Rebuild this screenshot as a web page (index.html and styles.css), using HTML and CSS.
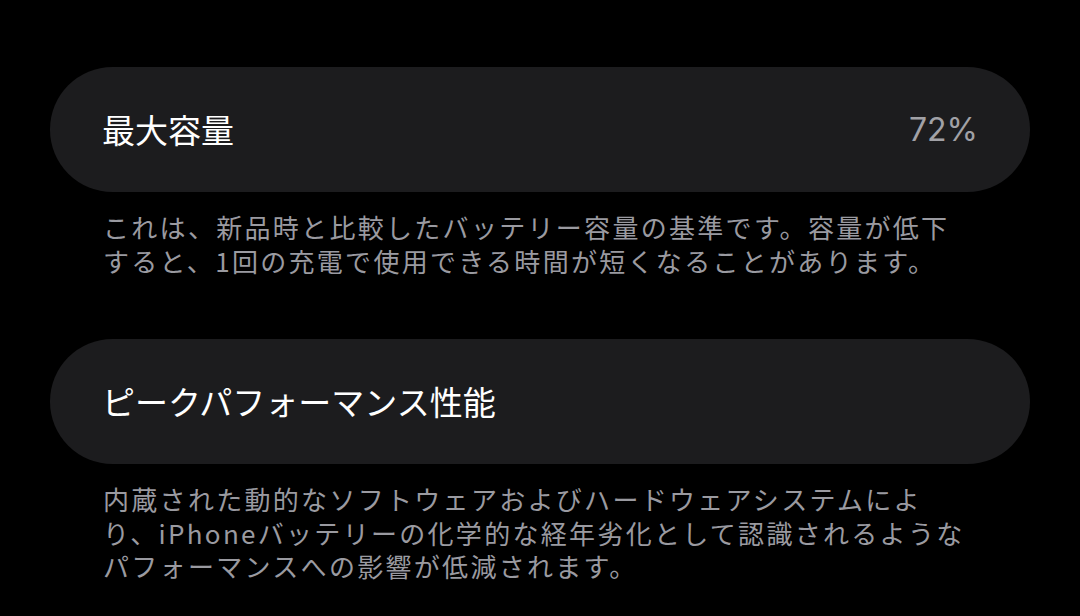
FILE: index.html
```html
<!DOCTYPE html>
<html lang="ja">
<head>
<meta charset="utf-8">
<link rel="stylesheet" href="styles.css">
</head>
<body>
<main class="page">
  <section class="group">
    <div class="card">
      <span class="title">最大容量</span>
      <span class="value">72%</span>
    </div>
    <p class="footer">これは、新品時と比較したバッテリー容量の基準です。容量が低下すると、1回の充電で使用できる時間が短くなることがあります。</p>
  </section>
  <section class="group">
    <div class="card">
      <span class="title">ピークパフォーマンス性能</span>
    </div>
    <p class="footer">内蔵された動的なソフトウェアおよびハードウェアシステムにより、iPhoneバッテリーの化学的な経年劣化として認識されるようなパフォーマンスへの影響が低減されます。</p>
  </section>
</main>
</body>
</html>
```
FILE: styles.css
```css
html, body {
  margin: 0;
  padding: 0;
  background: #000;
}
body {
  width: 1080px;
  height: 616px;
  overflow: hidden;
  font-family: "Noto Sans CJK JP", sans-serif;
}
.page {
  display: flex;
  flex-direction: column;
  gap: 62px;
  padding: 67px 50px 0 50px;
}
.group {
  display: flex;
  flex-direction: column;
  gap: 18px;
}
.card {
  height: 125px;
  box-sizing: border-box;
  background: #1c1c1e;
  border-radius: 63px;
  padding: 0 52px 0 52px;
  display: flex;
  align-items: center;
  justify-content: space-between;
}
.title {
  color: #fff;
  font-size: 33px;
  line-height: 1;
}
.value {
  color: #a1a1a6;
  font-family: "Inter", "Noto Sans CJK JP", sans-serif;
  font-size: 32px;
  line-height: 1;
}
.footer {
  margin: 0;
  padding-left: 53px;
  width: 865px;
  color: #9a9aa0;
  font-size: 26px;
  letter-spacing: 2.3px;
  line-height: 33.5px;
}
```
